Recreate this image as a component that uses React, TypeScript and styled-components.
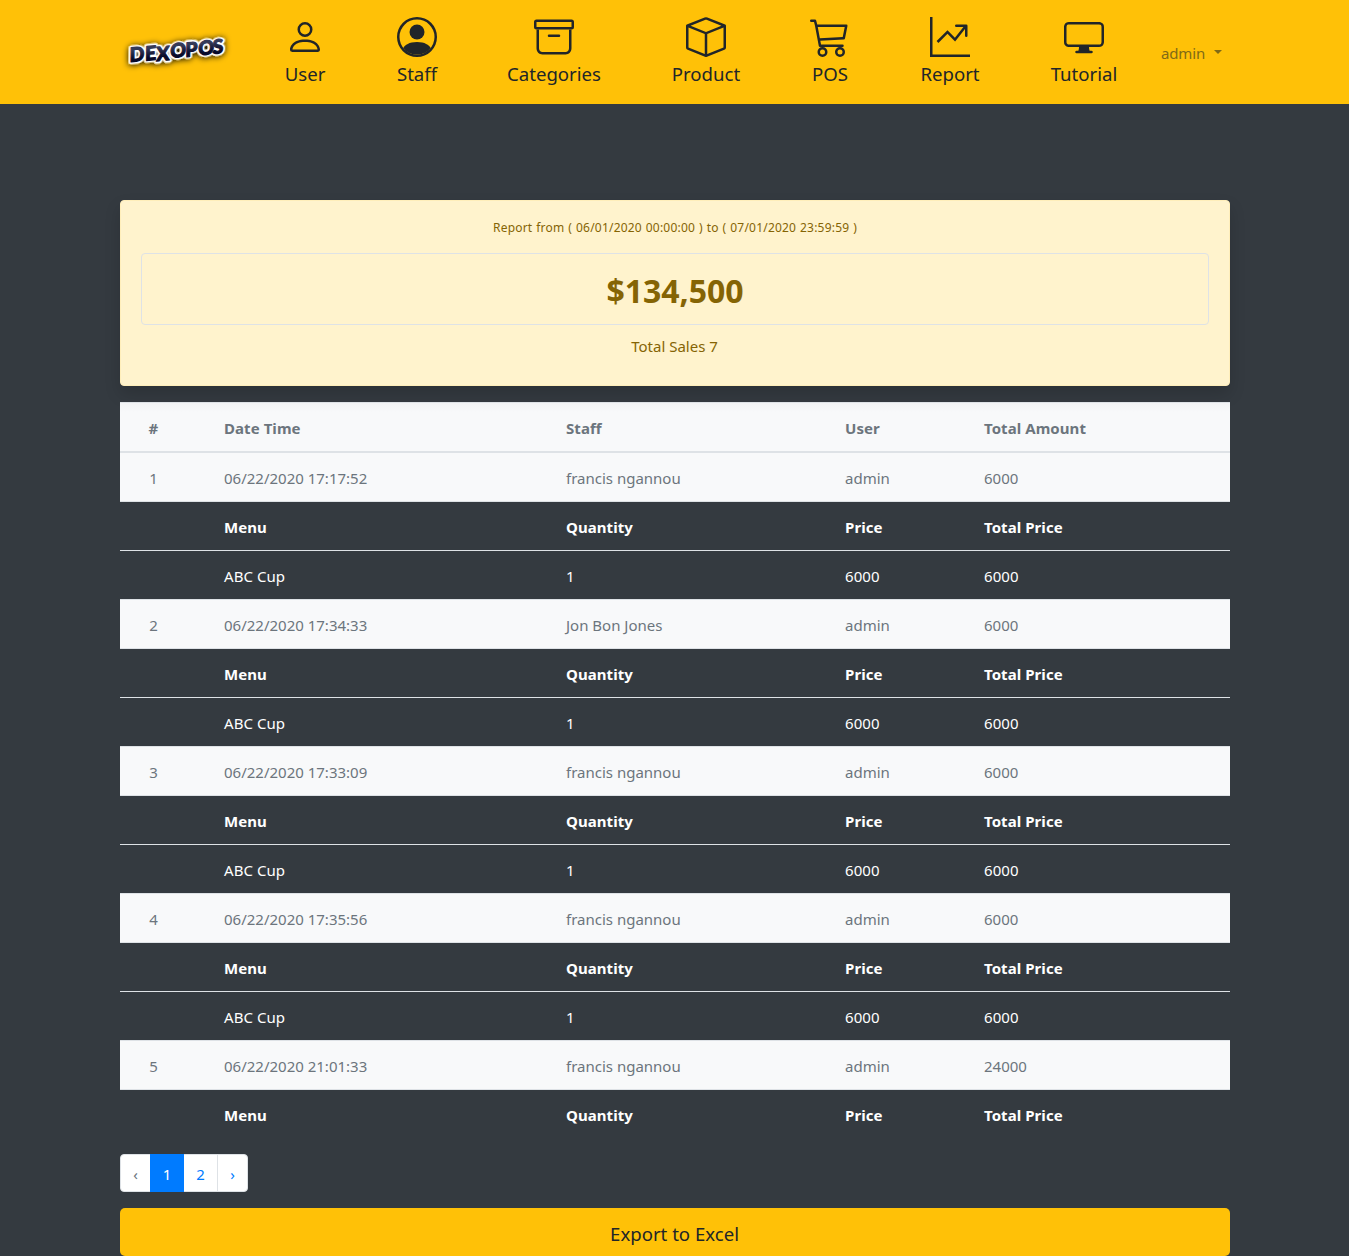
import React from "react";
import styled, { createGlobalStyle } from "styled-components";
import { BsBox, BsCart3, BsDisplay } from "react-icons/bs";

const GlobalStyle = createGlobalStyle`
  *, *::before, *::after { box-sizing: border-box; }
  body {
    margin: 0;
    background: #343a40;
    color: #212529;
    font-family: "Noto Sans", "Open Sans", sans-serif;
    font-size: 15px;
    line-height: 24px;
  }
`;

const Page = styled.div`
  height: 1256px;
  overflow: hidden;
`;

const Navbar = styled.nav`
  display: flex;
  height: 104px;
  padding-left: 120px;
  background: #ffc107;
`;

const Brand = styled.a`
  width: 130px;
  padding-top: 26px;
`;

const Menu = styled.div`
  display: flex;
`;

const NavItem = styled.a<{ $width: number }>`
  display: flex;
  flex-direction: column;
  align-items: center;
  width: ${(p) => p.$width}px;
  padding-top: 17px;
  color: #212529;

  svg {
    width: 40px;
    height: 40px;
    flex: none;
  }
`;

const NavLabel = styled.span`
  font-size: 18.6px;
  line-height: 30px;
  margin-top: 2px;
  white-space: nowrap;
`;

const Account = styled.a`
  display: flex;
  align-items: center;
  gap: 9px;
  height: 24px;
  margin: 41px 0 0 11px;
  color: #806a17;
  letter-spacing: -0.15px;
`;

const Caret = styled.span`
  margin-top: -3px;
  border-top: 4px solid #806a17;
  border-left: 4px solid transparent;
  border-right: 4px solid transparent;
`;

const Container = styled.main`
  width: 1110px;
  margin: 96px 0 0 120px;
`;

const Summary = styled.section`
  height: 186px;
  padding: 15px 20px 0;
  border: 1px solid #ffeeba;
  border-radius: 4px;
  background: #fff3cd;
  color: #856404;
  text-align: center;
  box-shadow: 0 8px 16px rgba(0, 0, 0, 0.15);
`;

const Period = styled.div`
  height: 37px;
  font-size: 12px;
  line-height: 24px;
  letter-spacing: 0.2px;
  word-spacing: 0.6px;
`;

const Total = styled.h1`
  height: 72px;
  margin: 0;
  border: 1px solid #dee2e6;
  border-radius: 4px;
  font-size: 32px;
  font-weight: 700;
  line-height: 74px;
`;

const SalesCount = styled.div`
  padding: 9px 1px 0 0;
`;

const Table = styled.div`
  margin-top: 16px;
`;

type Tone = "head" | "sale" | "itemHead" | "item";

const Row = styled.div<{ $tone: Tone; $thick?: boolean }>`
  display: grid;
  grid-template-columns: 104px 342px 279px 139px 1fr;
  height: ${(p) => (p.$thick ? 50 : 49)}px;
  padding-top: 13px;
  border-top: ${(p) => (p.$thick ? 2 : 1)}px solid #dee2e6;
  background: ${(p) =>
    p.$tone === "head"
      ? "linear-gradient(#f2f3f5, #f8f9fa 9px)"
      : p.$tone === "sale"
        ? "#f8f9fa"
        : "#343a40"};
  color: ${(p) => (p.$tone === "head" || p.$tone === "sale" ? "#6c757d" : "#fff")};
  font-weight: ${(p) => (p.$tone === "head" || p.$tone === "itemHead" ? 700 : 400)};
  letter-spacing: ${(p) => (p.$tone === "sale" ? 0 : 0.06)}px;
`;

const Cell = styled.span`
  white-space: nowrap;

  &:first-child {
    padding-right: 37px;
    text-align: center;
  }
`;

const Pagination = styled.div`
  display: flex;
  width: 128px;
  height: 38px;
  margin: 16px 0;
  border: 1px solid #dee2e6;
  border-radius: 4px;
  background: #fff;
`;

const PageLink = styled.a<{ $state?: "active" | "disabled"; $width: number; $divider?: boolean }>`
  width: ${(p) => p.$width}px;
  height: ${(p) => (p.$state === "active" ? 38 : 36)}px;
  margin-top: ${(p) => (p.$state === "active" ? -1 : 0)}px;
  padding-top: ${(p) => (p.$state === "active" ? 8 : 7)}px;
  border-left: ${(p) => (p.$divider ? "1px solid #dee2e6" : "0")};
  background: ${(p) => (p.$state === "active" ? "#007bff" : "transparent")};
  color: ${(p) => (p.$state === "active" ? "#fff" : p.$state === "disabled" ? "#6c757d" : "#007bff")};
  text-align: center;
`;

const ExportButton = styled.button`
  display: block;
  width: 100%;
  height: 48px;
  padding: 2px 1px 0 0;
  border: 0;
  border-radius: 5px;
  background: #ffc107;
  color: #212529;
  font-family: inherit;
  font-size: 18.6px;
`;

const Logo = () => (
  <svg width="120" height="50" viewBox="0 0 120 50" aria-label="DEXOPOS">
    <defs>
      <linearGradient id="ink" gradientUnits="userSpaceOnUse" x1="0" y1="-14" x2="0" y2="1">
        <stop offset="0.15" stopColor="#343a58" />
        <stop offset="0.75" stopColor="#070a2a" />
      </linearGradient>
      <filter id="glow" x="-20%" y="-60%" width="140%" height="220%">
        <feDropShadow dx="0" dy="0.8" stdDeviation="3" floodColor="#000" floodOpacity="1" />
      </filter>
      <text
        id="wordmark"
        x="0 15.5 27 41 56 69 83.5"
        y="0 0.3 1.8 0 0.3 0 0"
        fontFamily="Lato, sans-serif"
        fontWeight="900"
        fontSize="19.5"
        strokeLinejoin="round"
      >
        DEXOPOS
      </text>
    </defs>
    <g transform="translate(9.5 36) rotate(-5.5) skewX(-6)">
      <use href="#wordmark" fill="#fff" stroke="#fff" strokeWidth="4.6" filter="url(#glow)" />
      <use href="#wordmark" fill="url(#ink)" stroke="url(#ink)" strokeWidth="1.1" />
    </g>
  </svg>
);

const PersonIcon = () => (
  <svg viewBox="0 0 16 16" fill="currentColor">
    <path
      fillRule="evenodd"
      d="M13 14s1 0 1-1-1-4-6-4-6 3-6 4 1 1 1 1h10zm-9.995-.944v-.002.002zM3.022 13h9.956a.274.274 0 0 0 .014-.002l.008-.002c-.001-.246-.154-.986-.832-1.664C11.516 10.68 10.289 10 8 10c-2.29 0-3.516.68-4.168 1.332-.678.678-.83 1.418-.832 1.664a1.05 1.05 0 0 0 .022.004zm9.974.056v-.002.002zM8 7a2 2 0 1 0 0-4 2 2 0 0 0 0 4zm3-2a3 3 0 1 1-6 0 3 3 0 0 1 6 0z"
    />
  </svg>
);

const PersonCircleIcon = () => (
  <svg viewBox="0 0 16 16" fill="currentColor">
    <path d="M13.468 12.37C12.758 11.226 11.195 10 8 10s-4.757 1.225-5.468 2.37A6.987 6.987 0 0 0 8 15a6.987 6.987 0 0 0 5.468-2.63z" />
    <path d="M8 9a3 3 0 1 0 0-6 3 3 0 0 0 0 6z" />
    <path fillRule="evenodd" d="M8 1a7 7 0 1 0 0 14A7 7 0 0 0 8 1zM0 8a8 8 0 1 1 16 0A8 8 0 0 1 0 8z" />
  </svg>
);

const ArchiveIcon = () => (
  <svg viewBox="0 0 16 16" fill="currentColor" fillRule="evenodd">
    <path d="M2 5v7.5c0 .864.642 1.5 1.357 1.5h9.286c.715 0 1.357-.636 1.357-1.5V5h1v7.5c0 1.345-1.021 2.5-2.357 2.5H3.357C2.021 15 1 13.845 1 12.5V5h1z" />
    <path d="M5.5 7.5A.5.5 0 0 1 6 7h4a.5.5 0 0 1 0 1H6a.5.5 0 0 1-.5-.5zM15 2H1v2h14V2zM1 1a1 1 0 0 0-1 1v2a1 1 0 0 0 1 1h14a1 1 0 0 0 1-1V2a1 1 0 0 0-1-1H1z" />
  </svg>
);

const GraphIcon = () => (
  <svg viewBox="0 0 16 16" fill="currentColor" fillRule="evenodd">
    <path d="M0 0h1v16H0V0zm1 15h15v1H1v-1z" />
    <path d="M14.39 4.312L10.041 9.75 7 6.707l-3.646 3.647-.708-.708L7 5.293 9.959 8.25l3.65-4.563.781.624z" />
    <path d="M10 3.5a.5.5 0 0 1 .5-.5h4a.5.5 0 0 1 .5.5v4a.5.5 0 0 1-1 0V4h-3.5a.5.5 0 0 1-.5-.5z" />
  </svg>
);

const navItems = [
  { label: "User", width: 110, icon: <PersonIcon /> },
  { label: "Staff", width: 114, icon: <PersonCircleIcon /> },
  { label: "Categories", width: 160, icon: <ArchiveIcon /> },
  { label: "Product", width: 144, icon: <BsBox /> },
  { label: "POS", width: 104, icon: <BsCart3 /> },
  { label: "Report", width: 136, icon: <GraphIcon /> },
  { label: "Tutorial", width: 132, icon: <BsDisplay /> },
];

const sales = [
  { time: "06/22/2020 17:17:52", staff: "francis ngannou", total: "6000" },
  { time: "06/22/2020 17:34:33", staff: "Jon Bon Jones", total: "6000" },
  { time: "06/22/2020 17:33:09", staff: "francis ngannou", total: "6000" },
  { time: "06/22/2020 17:35:56", staff: "francis ngannou", total: "6000" },
  { time: "06/22/2020 21:01:33", staff: "francis ngannou", total: "24000" },
];

const TableRow = ({ tone, thick, cells }: { tone: Tone; thick?: boolean; cells: string[] }) => (
  <Row $tone={tone} $thick={thick}>
    {cells.map((text, i) => (
      <Cell key={i}>{text}</Cell>
    ))}
  </Row>
);

export default function App() {
  return (
    <Page>
      <GlobalStyle />
      <Navbar>
        <Brand>
          <Logo />
        </Brand>
        <Menu>
          {navItems.map((item) => (
            <NavItem key={item.label} $width={item.width}>
              {item.icon}
              <NavLabel>{item.label}</NavLabel>
            </NavItem>
          ))}
        </Menu>
        <Account>
          admin
          <Caret />
        </Account>
      </Navbar>
      <Container>
        <Summary>
          <Period>Report from ( 06/01/2020 00:00:00 ) to ( 07/01/2020 23:59:59 )</Period>
          <Total>$134,500</Total>
          <SalesCount>Total Sales 7</SalesCount>
        </Summary>
        <Table>
          <TableRow tone="head" cells={["#", "Date Time", "Staff", "User", "Total Amount"]} />
          {sales.map((sale, i) => (
            <React.Fragment key={sale.time}>
              <TableRow
                tone="sale"
                thick={i === 0}
                cells={[String(i + 1), sale.time, sale.staff, "admin", sale.total]}
              />
              <TableRow tone="itemHead" cells={["", "Menu", "Quantity", "Price", "Total Price"]} />
              {i < 4 && <TableRow tone="item" cells={["", "ABC Cup", "1", "6000", "6000"]} />}
            </React.Fragment>
          ))}
        </Table>
        <Pagination>
          <PageLink $width={29} $state="disabled">‹</PageLink>
          <PageLink $width={34} $state="active">1</PageLink>
          <PageLink $width={33}>2</PageLink>
          <PageLink $width={30} $divider>›</PageLink>
        </Pagination>
        <ExportButton>Export to Excel</ExportButton>
      </Container>
    </Page>
  );
}
